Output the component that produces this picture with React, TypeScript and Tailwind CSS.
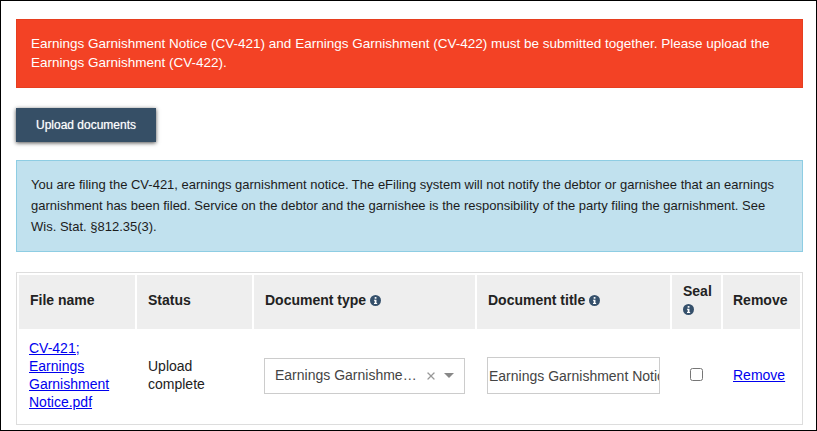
import { X } from "lucide-react";

const InfoIcon = () => (
  <svg viewBox="0 0 16 16" className="inline-block w-[11px] h-[11px] align-[-1px]">
    <circle cx="8" cy="8" r="8" fill="#35506b" />
    <rect x="6.8" y="3" width="2.6" height="2.4" fill="#fff" />
    <path d="M5.8 6.8h3.6v5h1v1.4H5.8v-1.4h1v-3.6h-1z" fill="#fff" />
  </svg>
);

const App = () => {
  return (
    <div className="w-[817px] h-[431px] overflow-hidden border border-black bg-white pt-[18px] pl-[15px] pr-[13px] font-['Liberation_Sans',Arial,sans-serif] text-[14px] text-[#222]">
      <div className="h-[69px] border border-[#e63e1f] bg-[#f34225] pl-[14px] pr-4 pt-[14px] text-[13.5px] leading-[19px] text-white">
        Earnings Garnishment Notice (CV-421) and Earnings Garnishment (CV-422) must be submitted together. Please upload the Earnings Garnishment (CV-422).
      </div>

      <button className="mt-5 block h-[34px] w-[140px] bg-[#364f66] text-center text-[12px] text-white shadow-[0_1px_4px_rgba(0,0,0,0.7)] [text-shadow:0_0_1px_rgba(255,255,255,0.6)]">
        Upload documents
      </button>

      <div className="mt-[18px] h-[92px] border border-[#8ecde3] bg-[#c1e1ee] pl-[14px] pr-4 pt-[13px] text-[13px] leading-[21px] text-[#1c1c1c]">
        You are filing the CV-421, earnings garnishment notice. The eFiling system will not notify the debtor or garnishee that an earnings garnishment has been filed. Service on the debtor and the garnishee is the responsibility of the party filing the garnishment. See Wis. Stat. §812.35(3).
      </div>

      <table className="mt-5 w-[787px] table-fixed border-separate border-spacing-[2px] border border-[#ddd]">
        <colgroup>
          <col className="w-[116px]" />
          <col className="w-[115px]" />
          <col className="w-[221px]" />
          <col className="w-[193px]" />
          <col className="w-[49px]" />
          <col />
        </colgroup>
        <thead>
          <tr className="h-[54px] bg-[#eee] text-left text-[#222]">
            <th className="pl-[11px] pb-[4px] font-bold">File name</th>
            <th className="pl-[11px] pb-[4px] font-bold">Status</th>
            <th className="pl-[11px] pb-[4px] font-bold">
              Document type <InfoIcon />
            </th>
            <th className="pl-[11px] pb-[4px] font-bold">
              Document title <InfoIcon />
            </th>
            <th className="pl-[11px] pb-[4px] font-bold leading-[18px]">
              Seal
              <br />
              <InfoIcon />
            </th>
            <th className="pl-[10px] pb-[4px] font-bold">Remove</th>
          </tr>
        </thead>
        <tbody>
          <tr className="h-[91px]">
            <td className="pl-[10px] pr-[10px] pb-[4px] leading-[18px]">
              <a href="#" className="text-[#0000ee] underline">
                CV-421; Earnings Garnishment Notice.pdf
              </a>
            </td>
            <td className="pl-[11px] pr-[10px] pb-[4px] leading-[18px]">Upload complete</td>
            <td className="pl-[10px] pb-[2px]">
              <div className="flex h-9 w-[201px] items-center border border-[#ccc] pl-[10px] pr-[10px] text-[#444]">
                <span className="flex-1 truncate">Earnings Garnishment Notice</span>
                <X size={12} strokeWidth={2.5} className="ml-[5px] text-[#999]" />
                <span className="ml-[7px] h-0 w-0 border-x-[5px] border-t-[5px] border-x-transparent border-t-[#888]" />
              </div>
            </td>
            <td className="pl-[10px] pb-[2px]">
              <input
                readOnly
                value="Earnings Garnishment Notice"
                className="h-[37px] w-[173px] border border-[#ccc] pl-[1px] text-[#444]"
              />
            </td>
            <td className="text-center">
              <input type="checkbox" className="h-[13px] w-[13px]" />
            </td>
            <td className="pl-[10px] pb-[2px]">
              <a href="#" className="text-[#0000ee] underline">
                Remove
              </a>
            </td>
          </tr>
        </tbody>
      </table>
    </div>
  );
};

export default App;
